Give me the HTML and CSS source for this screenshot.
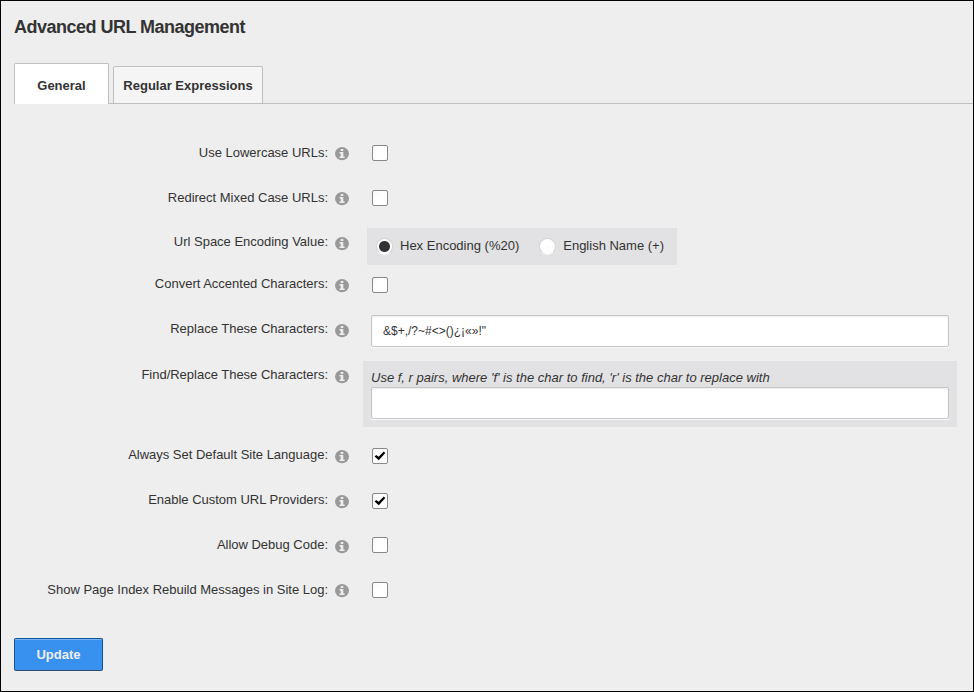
FILE: index.html
```html
<!DOCTYPE html>
<html lang="en">
<head>
<meta charset="utf-8">
<title>Advanced URL Management</title>
<link rel="stylesheet" href="styles.css">
</head>
<body>
<svg class="defs" width="0" height="0" aria-hidden="true">
  <symbol id="info" viewBox="0 0 14 14"><ellipse cx="7" cy="6.6" rx="7" ry="6.6" fill="#999"/><path d="M5.7 1.9h2.6v2H5.7zM4.5 5h3.8v4.6h1.3v1.4H4.5V9.6h1.2V6.4H4.5z" fill="#eee"/></symbol>
  <symbol id="check" viewBox="0 0 14 14"><path d="M1.6 7.6 3.2 5.9l2.4 1.9 5.2-5.3 1.5 1.6-6.5 7.2z" fill="#000"/></symbol>
</svg>
<main class="page">
  <h1>Advanced URL Management</h1>
  <nav class="tabs">
    <a class="tab active">General</a>
    <a class="tab regex">Regular Expressions</a>
  </nav>
  <form class="settings">
    <div class="row r1"><label>Use Lowercase URLs:</label><svg class="info"><use href="#info"/></svg><span class="checkbox"></span></div>
    <div class="row r2"><label>Redirect Mixed Case URLs:</label><svg class="info"><use href="#info"/></svg><span class="checkbox"></span></div>
    <div class="row encoding"><label>Url Space Encoding Value:</label><svg class="info"><use href="#info"/></svg>
      <div class="radios">
        <span class="radio selected"></span><span class="hex">Hex Encoding (%20)</span>
        <span class="radio"></span><span>English Name (+)</span>
      </div>
    </div>
    <div class="row accented"><label>Convert Accented Characters:</label><svg class="info"><use href="#info"/></svg><span class="checkbox"></span></div>
    <div class="row replace"><label>Replace These Characters:</label><svg class="info"><use href="#info"/></svg><div class="field">&amp;$+,/?~#&lt;&gt;()¿¡«»!"</div></div>
    <div class="row find"><label>Find/Replace These Characters:</label><svg class="info"><use href="#info"/></svg>
      <div class="panel"><em>Use f, r pairs, where 'f' is the char to find, 'r' is the char to replace with</em><div class="field"></div></div>
    </div>
    <div class="row language"><label>Always Set Default Site Language:</label><svg class="info"><use href="#info"/></svg><span class="checkbox"><svg><use href="#check"/></svg></span></div>
    <div class="row providers"><label>Enable Custom URL Providers:</label><svg class="info"><use href="#info"/></svg><span class="checkbox"><svg><use href="#check"/></svg></span></div>
    <div class="row debug"><label>Allow Debug Code:</label><svg class="info"><use href="#info"/></svg><span class="checkbox"></span></div>
    <div class="row log"><label>Show Page Index Rebuild Messages in Site Log:</label><svg class="info"><use href="#info"/></svg><span class="checkbox"></span></div>
    <button class="update" type="button">Update</button>
  </form>
</main>
</body>
</html>
```
FILE: styles.css
```css
* { box-sizing: border-box; }
body { margin: 0; font: 13px/18px "Liberation Sans", Arial, sans-serif; color: #333; }
.defs { display: none; }
.page { height: 692px; border: 1px solid #000; background: #eee; overflow: hidden; }
h1 { margin: 14px 0 0 13px; font-size: 18px; line-height: 24px; letter-spacing: -.51px; }
.tabs { display: flex; align-items: flex-end; gap: 4px; height: 41px; margin: 24px 0 0 13px; border-bottom: 1px solid #bfbfbf; }
.tab { height: 37px; border: 1px solid #bfbfbf; border-bottom: 0; border-radius: 2px 2px 0 0; background: #f5f5f5; font-weight: bold; text-align: center; line-height: 37px; }
.active { width: 95px; height: 41px; margin-bottom: -1px; background: #fff; line-height: 43px; }
.regex { width: 150px; }
.settings { padding-top: 40px; }
.row { display: grid; grid-template-columns: 327px 14px 1fr; column-gap: 7px; align-items: start; height: 45px; }
label { text-align: right; white-space: nowrap; letter-spacing: -.01px; }
.info { width: 14px; height: 14px; margin-top: 3px; }
.checkbox { width: 16px; height: 16px; margin: 1px 0 0 16px; border: 1px solid #888; border-radius: 2px; background: linear-gradient(135deg, #f5f5f5, #fff 35%); }
.checkbox svg { display: block; width: 14px; height: 14px; }
.encoding { height: 42px; margin-top: -1px; }
.encoding .info, .accented .info, .replace .info { margin-top: 4px; }
.radios { display: flex; align-items: center; width: 310px; height: 37px; margin: -5px 0 0 11px; padding: 0 0 2px 9px; background: #e2e2e4; }
.radio { width: 17px; height: 17px; flex: none; margin: 2px 7px 0 0; border: 1px solid #d3d3d4; border-bottom-color: #f2f2f2; border-radius: 50%; background: #fff; }
.selected { background: radial-gradient(circle, #333 5px, #fff 6px); }
.hex { margin-right: 20px; }
.accented .checkbox { margin-top: 2px; }
.replace { height: 46px; }
.field { width: 578px; height: 32px; border: 1px solid #c4c4c4; border-radius: 2px; background: #fff; box-shadow: inset 0 1px 2px #eee, 0 1px 0 #f9f9f9; padding-left: 11px; font-size: 12px; line-height: 30px; }
.replace .field { margin: -5px 0 0 15px; }
.find { height: 80px; }
.find .info { margin-top: 4px; }
.panel { width: 594px; height: 66px; margin: -5px 0 0 7px; padding: 8px 8px 8px; background: #e2e2e4; }
em { display: block; height: 18px; white-space: nowrap; }
.language .checkbox, .providers .checkbox { margin-top: 2px; }
.language .info, .providers .info, .debug .info { margin-top: 4px; }
.update { display: block; width: 89px; height: 33px; margin: 12px 0 0 13px; padding: 0; border: 1px solid #11569b; border-bottom-color: #334f70; border-radius: 2px; background: #3891ee; box-shadow: inset 0 1px 0 #75b5f8; color: #eee; font: bold 13px/31px "Liberation Sans", Arial, sans-serif; }
```
